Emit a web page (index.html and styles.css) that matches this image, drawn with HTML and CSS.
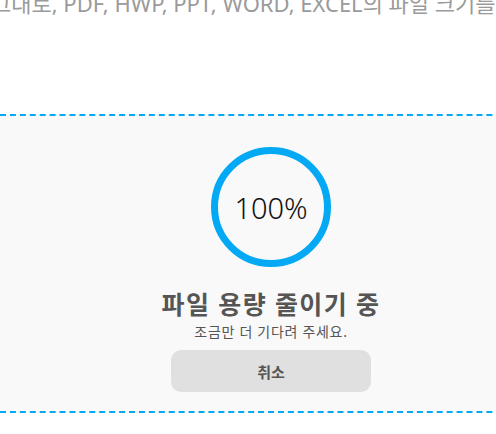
FILE: index.html
```html
<!DOCTYPE html>
<html lang="ko">
<head>
    <meta charset="UTF-8">
    <meta name="viewport" content="width=device-width, initial-scale=1.0">
    <title>파일 용량 줄이기</title>

    <link rel="stylesheet" href="styles.css">
</head>
<body>

    <main class="page">
        <p class="intro">그대로, PDF, HWP, PPT, WORD, EXCEL의 파일 크기를</p>

        <section class="drop-zone">
            <div class="progress-ring">
                <span class="progress-value">100%</span>
            </div>
            <h2 class="status-title">파일 용량 줄이기 중</h2>
            <p class="status-text">조금만 더 기다려 주세요.</p>
            <button type="button" class="cancel-btn">취소</button>
        </section>
    </main>

</body>
</html>
```

FILE: styles.css
```css
body {
    margin: 0;
    padding: 0;
    background-color: #fff;
    font-family: "Noto Sans", "Noto Sans CJK KR", sans-serif;
    overflow: hidden;
}

.page {
    width: 542px;
}

.intro {
    margin: -11px 0 0 -9px;
    font-size: 22px;
    line-height: 28px;
    color: #9a9a9a;
    white-space: nowrap;
}

.drop-zone {
    margin-top: 97px;
    padding: 31px 0 19px;
    background-color: #f9f9f9;
    border-top: 2px dashed #03a9f4;
    border-bottom: 2px dashed #03a9f4;
    display: flex;
    flex-direction: column;
    align-items: center;
}

.progress-ring {
    width: 120px;
    height: 120px;
    box-sizing: border-box;
    border: 7px solid #03a9f4;
    border-radius: 50%;
    display: flex;
    justify-content: center;
    align-items: center;
}

.progress-value {
    font-size: 29px;
    font-weight: 300;
    color: #111;
}

.status-title {
    margin: 21px 0 0;
    font-size: 25px;
    line-height: 32px;
    letter-spacing: 1.4px;
    font-weight: 700;
    color: #555;
}

.status-text {
    margin: 3px 0 0;
    font-size: 14px;
    line-height: 18px;
    letter-spacing: 0.7px;
    color: #555;
}

.cancel-btn {
    margin-top: 9px;
    width: 200px;
    height: 42px;
    border: none;
    border-radius: 10px;
    background-color: #e0e0e0;
    color: #555;
    font-family: inherit;
    font-size: 15px;
    font-weight: 600;
    cursor: pointer;
}
```
